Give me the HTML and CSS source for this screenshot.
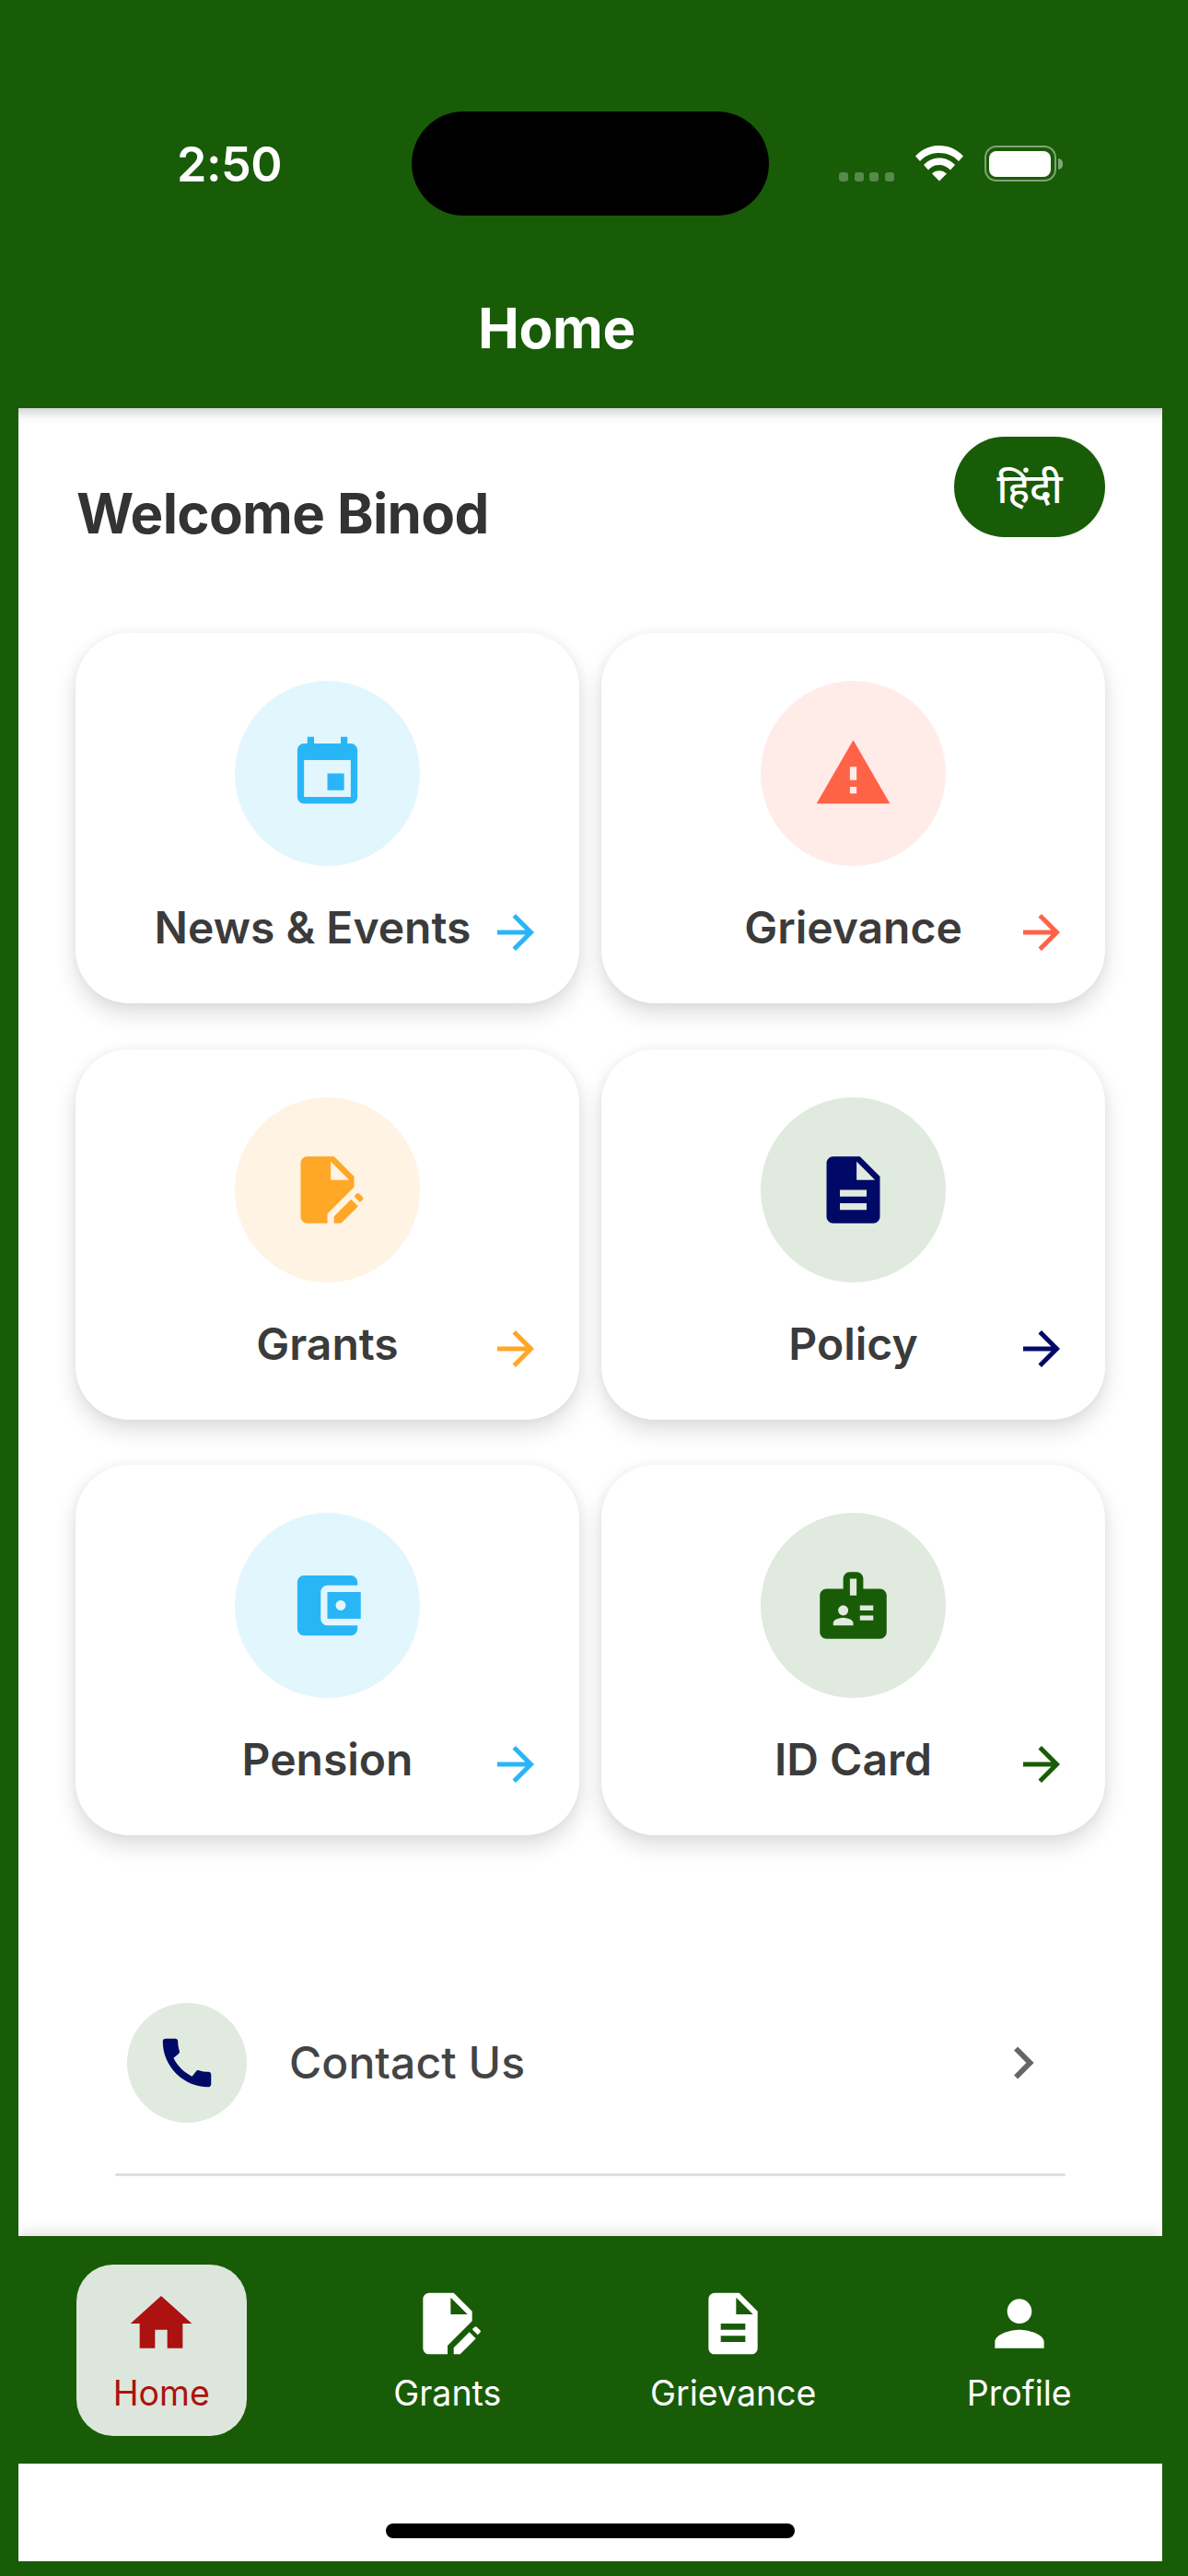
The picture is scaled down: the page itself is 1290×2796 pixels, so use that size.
FILE: index.html
```html
<!DOCTYPE html>
<html lang="en">
<head>
<meta charset="utf-8">
<title>Home</title>
<link rel="stylesheet" href="styles.css">
</head>
<body>
<svg class="defs" aria-hidden="true">
  <symbol id="i-event" viewBox="0 0 24 24"><path d="M17 12h-5v5h5v-5zM16 1v2H8V1H6v2H5c-1.11 0-1.99.9-1.99 2L3 19c0 1.1.89 2 2 2h14c1.1 0 2-.9 2-2V5c0-1.1-.9-2-2-2h-1V1h-2zm3 18H5V8h14v11z"/></symbol>
  <symbol id="i-warning" viewBox="0 0 24 24"><path d="M1 21h22L12 2 1 21zm12-3h-2v-2h2v2zm0-4h-2v-4h2v4z"/></symbol>
  <symbol id="i-edit-doc" viewBox="0 0 24 24"><path d="M6 2c-1.1 0-2 .9-2 2v16c0 1.1.9 2 2 2h6v-2.83l8-8V8l-6-6H6zm7 7V3.5L18.5 9H13z"/><path d="M14 22v-2.1l5.1-5.1 2.1 2.1-5.1 5.1H14zM20 13.9l.8-.8c.2-.2.5-.2.7 0l1.1 1.1c.2.2.2.5 0 .7l-.8.8-1.8-1.8z"/></symbol>
  <symbol id="i-doc" viewBox="0 0 24 24"><path d="M14 2H6c-1.1 0-1.99.9-1.99 2L4 20c0 1.1.89 2 1.99 2H18c1.1 0 2-.9 2-2V8l-6-6zm2 16H8v-2h8v2zm0-4H8v-2h8v2zm-3-5V3.5L18.5 9H13z"/></symbol>
  <symbol id="i-wallet" viewBox="0 0 24 24"><path d="M21 18v1c0 1.1-.9 2-2 2H5c-1.11 0-2-.9-2-2V5c0-1.1.89-2 2-2h14c1.1 0 2 .9 2 2v1h-9c-1.11 0-2 .9-2 2v8c0 1.1.89 2 2 2h9zm-9-2h10V8H12v8zm4-2.5c-.83 0-1.5-.67-1.5-1.5s.67-1.5 1.5-1.5 1.5.67 1.5 1.5-.67 1.5-1.5 1.5z"/></symbol>
  <symbol id="i-badge" viewBox="0 0 24 24"><path d="M20 7h-5V4c0-1.1-.9-2-2-2h-2c-1.1 0-2 .9-2 2v3H4c-1.1 0-2 .9-2 2v11c0 1.1.9 2 2 2h16c1.1 0 2-.9 2-2V9c0-1.1-.9-2-2-2zM9 12c.83 0 1.5.67 1.5 1.5S9.83 15 9 15s-1.5-.67-1.5-1.5S8.17 12 9 12zm3 6H6v-.75c0-1 2-1.5 3-1.5s3 .5 3 1.5V18zm1-9h-2V4h2v5zm5 7.5h-4V15h4v1.5zm0-3h-4V12h4v1.5z"/></symbol>
  <symbol id="i-arrow" viewBox="0 0 24 24"><path d="M12 4l-1.41 1.41L16.17 11H4v2h12.17l-5.58 5.59L12 20l8-8z"/></symbol>
  <symbol id="i-call" viewBox="0 0 24 24"><path d="M20.01 15.38c-1.23 0-2.42-.2-3.53-.56-.35-.12-.74-.03-1.01.24l-1.57 1.97c-2.83-1.35-5.48-3.9-6.89-6.83l1.95-1.66c.27-.28.35-.67.24-1.02-.37-1.11-.56-2.3-.56-3.53 0-.54-.45-.99-.99-.99H4.19C3.65 3 3 3.24 3 3.99 3 13.28 10.73 21 20.01 21c.71 0 .99-.63.99-1.18v-3.45c0-.54-.45-.99-.99-.99z"/></symbol>
  <symbol id="i-chevron" viewBox="0 0 24 24"><path d="M10 6L8.59 7.41 13.17 12l-4.58 4.59L10 18l6-6z"/></symbol>
  <symbol id="i-home" viewBox="0 0 24 24"><path d="M10 20v-6h4v6h5v-8h3L12 3 2 12h3v8z"/></symbol>
  <symbol id="i-person" viewBox="0 0 24 24"><path d="M12 12c2.21 0 4-1.79 4-4s-1.79-4-4-4-4 1.79-4 4 1.79 4 4 4zm0 2c-2.67 0-8 1.34-8 4v2h16v-2c0-2.66-5.33-4-8-4z"/></symbol>
</svg>

<div class="screen">
  <header class="top">
    <div class="status">
      <span class="time">2:50</span>
      <div class="island"></div>
      <div class="status-right">
        <div class="signal"><i></i><i></i><i></i><i></i></div>
        <svg class="wifi" viewBox="0 0 53 39"><path d="M0 11.5C14-3.8 38-3.8 52 11.5L47 17C36 5 16 5 5 17Z"/><path d="M9 21C18 11 34 11 43 21L38 26.5C31 19 21 19 14 26.5Z"/><path d="M18 30.5C23 26 29 26 34 30.5L26 38.5Z"/></svg>
        <div class="battery"><div class="battery-body"><div class="battery-fill"></div></div><div class="battery-cap"></div></div>
      </div>
    </div>
    <h1 class="title">Home</h1>
  </header>

  <main class="panel">
    <div class="welcome-row">
      <h2 class="welcome">Welcome Binod</h2>
      <button class="lang">हिंदी</button>
    </div>

    <div class="grid">
      <div class="card blue">
        <div class="circle"><svg class="icon-lg"><use href="#i-event"/></svg></div>
        <div class="label label-long">News &amp; Events</div>
        <svg class="arrow"><use href="#i-arrow"/></svg>
      </div>
      <div class="card red">
        <div class="circle"><svg class="icon-lg"><use href="#i-warning"/></svg></div>
        <div class="label">Grievance</div>
        <svg class="arrow"><use href="#i-arrow"/></svg>
      </div>
      <div class="card orange">
        <div class="circle"><svg class="icon-lg"><use href="#i-edit-doc"/></svg></div>
        <div class="label">Grants</div>
        <svg class="arrow"><use href="#i-arrow"/></svg>
      </div>
      <div class="card navy">
        <div class="circle"><svg class="icon-lg"><use href="#i-doc"/></svg></div>
        <div class="label">Policy</div>
        <svg class="arrow"><use href="#i-arrow"/></svg>
      </div>
      <div class="card blue">
        <div class="circle"><svg class="icon-lg"><use href="#i-wallet"/></svg></div>
        <div class="label">Pension</div>
        <svg class="arrow"><use href="#i-arrow"/></svg>
      </div>
      <div class="card green">
        <div class="circle"><svg class="icon-lg"><use href="#i-badge"/></svg></div>
        <div class="label">ID Card</div>
        <svg class="arrow"><use href="#i-arrow"/></svg>
      </div>
    </div>

    <div class="contact">
      <div class="contact-circle"><svg class="icon-md"><use href="#i-call"/></svg></div>
      <span class="contact-text">Contact Us</span>
      <svg class="chevron"><use href="#i-chevron"/></svg>
    </div>
    <div class="divider"></div>
  </main>

  <nav class="nav">
    <div class="tab active"><svg class="icon-nav"><use href="#i-home"/></svg><span>Home</span></div>
    <div class="tab"><svg class="icon-nav"><use href="#i-edit-doc"/></svg><span>Grants</span></div>
    <div class="tab"><svg class="icon-nav"><use href="#i-doc"/></svg><span>Grievance</span></div>
    <div class="tab"><svg class="icon-nav"><use href="#i-person"/></svg><span>Profile</span></div>
  </nav>

  <div class="home-strip"><div class="home-bar"></div></div>
</div>
</body>
</html>
```
FILE: styles.css
```css
* { box-sizing: border-box; }
html, body { margin: 0; padding: 0; }
body { font-family: Inter, "Noto Sans", sans-serif; background: #195c07; }
.defs { display: none; }

.screen {
  width: 1290px;
  height: 2796px;
  background: #195c07;
  display: flex;
  flex-direction: column;
  overflow: hidden;
}

/* header */
.top {
  height: 443px;
  flex: none;
  position: relative;
  z-index: 2;
  background: #195c07;
  box-shadow: 0 5px 12px rgba(0, 0, 0, .2);
  clip-path: inset(0 28px -30px 20px);
}
.status {
  display: flex;
  align-items: flex-start;
  padding: 121px 0 0 192px;
  height: 234px;
  color: #fff;
}
.time {
  width: 255px;
  margin-top: 31px;
  font-size: 52px;
  line-height: 54px;
  font-weight: 600;
  letter-spacing: -.5px;
}
.island {
  width: 388px;
  height: 113px;
  border-radius: 57px;
  background: #000;
  flex: none;
}
.status-right {
  display: flex;
  align-items: flex-end;
  margin-left: 76px;
  height: 76px;
}
.signal { display: flex; gap: 6.5px; }
.signal i {
  display: block;
  width: 10px;
  height: 10px;
  border-radius: 3px;
  background: rgba(255, 255, 255, .28);
}
.wifi { width: 53px; height: 39px; fill: #fff; margin-left: 23px; }
.battery { display: flex; align-items: center; margin-left: 22px; }
.battery-body {
  width: 78px;
  height: 39px;
  border: 2.5px solid rgba(255, 255, 255, .45);
  border-radius: 13px;
  padding: 3.5px;
}
.battery-fill { width: 100%; height: 100%; background: #fff; border-radius: 8px; }
.battery-cap {
  width: 5px;
  height: 12px;
  margin-left: 2px;
  background: rgba(255, 255, 255, .45);
  border-radius: 0 6px 6px 0;
}
.title {
  margin: 0;
  padding: 86px 81px 0 0;
  text-align: center;
  font-size: 60px;
  line-height: 72px;
  font-weight: 700;
  letter-spacing: -.3px;
  color: #fff;
}

/* main panel */
.panel {
  flex: 1;
  margin: 0 28px 0 20px;
  padding: 31px 62px 0;
  background: #fff;
}
.welcome-row {
  display: flex;
  justify-content: space-between;
  align-items: flex-start;
  height: 109px;
}
.welcome {
  margin: 48px 0 0 1px;
  font-size: 60px;
  line-height: 70px;
  font-weight: 700;
  color: #333;
  letter-spacing: -.65px;
}
.lang {
  width: 164px;
  height: 109px;
  border: 0;
  border-radius: 55px;
  background: #195c07;
  color: #fff;
  font-family: "Noto Sans", "DejaVu Sans", sans-serif;
  font-size: 44px;
  font-weight: 500;
  padding: 0;
}
.grid {
  margin-top: 104px;
  display: grid;
  grid-template-columns: 547px 547px;
  grid-auto-rows: 402px;
  column-gap: 24px;
  row-gap: 49.5px;
}
.card {
  position: relative;
  background: #fff;
  border-radius: 58px;
  padding-top: 52px;
  display: flex;
  flex-direction: column;
  align-items: center;
  box-shadow: 0 12px 24px rgba(0, 0, 0, .13), 0 0 12px rgba(0, 0, 0, .05);
}
.circle {
  width: 201px;
  height: 201px;
  border-radius: 50%;
  display: flex;
  align-items: center;
  justify-content: center;
  flex: none;
}
.icon-lg { width: 87px; height: 87px; fill: currentColor; }
.label {
  margin-top: 37px;
  font-size: 48px;
  line-height: 60px;
  font-weight: 600;
  color: #3b3b3b;
}
.label-long { margin-right: 32px; }
.arrow {
  position: absolute;
  top: 295px;
  right: 39px;
  width: 60px;
  height: 60px;
  fill: currentColor;
}
.blue .circle { background: #e2f6fe; }
.blue .icon-lg, .blue .arrow { color: #29b6f6; }
.red .circle { background: #ffece9; }
.red .icon-lg, .red .arrow { color: #ff6347; }
.orange .circle { background: #fff3e3; }
.orange .icon-lg, .orange .arrow { color: #ffa726; }
.navy .circle { background: #e0eadf; }
.navy .icon-lg, .navy .arrow { color: #000a66; }
.green .circle { background: #e0eadf; }
.green .icon-lg, .green .arrow { color: #195c07; }

.contact {
  margin: 182px 0 0 56px;
  display: flex;
  align-items: center;
}
.contact-circle {
  width: 130px;
  height: 130px;
  border-radius: 50%;
  background: #e0eadf;
  display: flex;
  align-items: center;
  justify-content: center;
  flex: none;
}
.icon-md { width: 70px; height: 70px; fill: #000a66; }
.contact-text {
  margin-left: 46px;
  font-size: 48px;
  line-height: 60px;
  font-weight: 500;
  letter-spacing: .1px;
  color: #444;
}
.chevron { margin-left: auto; margin-right: 54px; width: 70px; height: 70px; fill: #666; }
.divider {
  margin: 55px 0 0 43px;
  width: 1032px;
  height: 3px;
  background: #dfdfdf;
  border-radius: 2px;
}

/* bottom nav */
.nav {
  flex: none;
  height: 247px;
  background: #195c07;
  margin: 0 28px 0 20px;
  display: grid;
  grid-template-columns: repeat(4, 1fr);
  justify-items: center;
  align-items: center;
  position: relative;
  box-shadow: 0 -4px 14px rgba(0, 0, 0, .12);
  clip-path: inset(-30px 0 0 0);
}
.tab {
  width: 185px;
  height: 186px;
  border-radius: 40px;
  padding-top: 24px;
  display: flex;
  flex-direction: column;
  align-items: center;
  color: #fff;
  font-size: 37.5px;
  line-height: 44px;
}
.tab span { margin-top: 14px; white-space: nowrap; }
.tab.active { background: #dde6dc; color: #ab1210; }
.icon-nav { width: 80px; height: 80px; fill: currentColor; flex: none; }

.home-strip {
  flex: none;
  height: 106px;
  margin: 0 28px 16px 20px;
  background: #fff;
  position: relative;
  display: flex;
  justify-content: center;
  padding-top: 65px;
}
.home-bar {
  width: 444px;
  height: 16px;
  border-radius: 8px;
  background: #000;
}
```
